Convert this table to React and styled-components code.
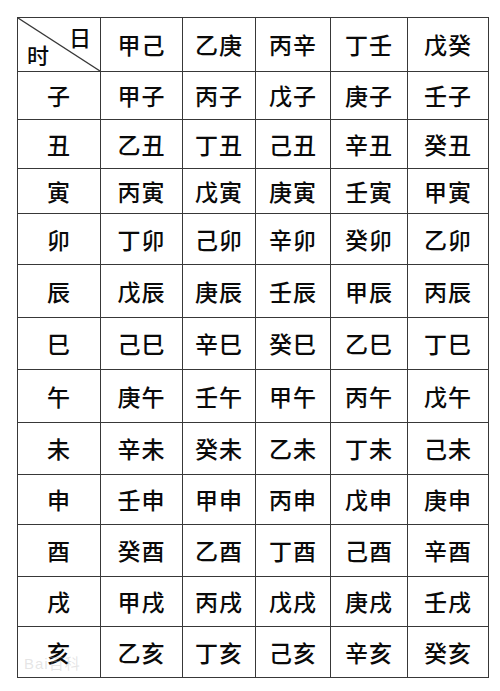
import React from "react";
import styled, { createGlobalStyle } from "styled-components";

const Global = createGlobalStyle`
  html, body { margin: 0; padding: 0; background: #fff; }
  body { width: 500px; height: 691px; overflow: hidden; }
`;

const Page = styled.div`
  position: relative;
  width: 500px;
  height: 691px;
  padding: 17px 0 0 17px;
  box-sizing: border-box;
  background: #fff;
  font-family: "Noto Sans CJK SC", "Noto Sans", sans-serif;
`;

const Table = styled.table`
  border-collapse: collapse;
  table-layout: fixed;
  width: 471px;
`;

const Row = styled.tr`
  height: ${(p) => p.$h}px;
`;

const Cell = styled.td`
  border: 1.5px solid #383838;
  padding: 0;
  text-align: center;
  vertical-align: middle;
  font-size: 23px;
  font-weight: 500;
  color: #0a0a0a;
  letter-spacing: 1px;
  line-height: 1;
`;

const CornerCell = styled.td`
  border: 1.5px solid #383838;
  padding: 0;
  position: relative;
  font-size: 22px;
  font-weight: 500;
  color: #0a0a0a;
  line-height: 1;
`;

const Diagonal = styled.svg`
  position: absolute;
  inset: 0;
  width: 100%;
  height: 100%;
`;

const DayLabel = styled.span`
  position: absolute;
  top: 7px;
  right: 9px;
`;

const HourLabel = styled.span`
  position: absolute;
  left: 9px;
  bottom: 6px;
`;

const Watermark = styled.div`
  position: absolute;
  left: 24px;
  top: 652px;
  font-family: "Liberation Sans", "Noto Sans CJK SC", sans-serif;
  font-size: 15px;
  color: rgba(180, 180, 180, 0.35);
  letter-spacing: 1px;
  pointer-events: none;
`;

const colWidths = [83, 82, 73, 75, 77, 81];
const heads = ["甲己", "乙庚", "丙辛", "丁壬", "戊癸"];
const rowHeights = [48, 49, 45, 51, 53, 52, 53, 52, 50, 52, 50, 51];

const rows = [
  ["子", "甲子", "丙子", "戊子", "庚子", "壬子"],
  ["丑", "乙丑", "丁丑", "己丑", "辛丑", "癸丑"],
  ["寅", "丙寅", "戊寅", "庚寅", "壬寅", "甲寅"],
  ["卯", "丁卯", "己卯", "辛卯", "癸卯", "乙卯"],
  ["辰", "戊辰", "庚辰", "壬辰", "甲辰", "丙辰"],
  ["巳", "己巳", "辛巳", "癸巳", "乙巳", "丁巳"],
  ["午", "庚午", "壬午", "甲午", "丙午", "戊午"],
  ["未", "辛未", "癸未", "乙未", "丁未", "己未"],
  ["申", "壬申", "甲申", "丙申", "戊申", "庚申"],
  ["酉", "癸酉", "乙酉", "丁酉", "己酉", "辛酉"],
  ["戌", "甲戌", "丙戌", "戊戌", "庚戌", "壬戌"],
  ["亥", "乙亥", "丁亥", "己亥", "辛亥", "癸亥"],
];

export default function App() {
  return (
    <>
      <Global />
      <Page>
        <Table>
          <colgroup>
            {colWidths.map((w, i) => (
              <col key={i} style={{ width: w }} />
            ))}
          </colgroup>
          <tbody>
            <Row $h={54}>
              <CornerCell>
                <Diagonal viewBox="0 0 100 100" preserveAspectRatio="none">
                  <line x1="0" y1="0" x2="100" y2="100" stroke="#383838" strokeWidth="1.3" vectorEffect="non-scaling-stroke" />
                </Diagonal>
                <DayLabel>日</DayLabel>
                <HourLabel>时</HourLabel>
              </CornerCell>
              {heads.map((h) => (
                <Cell key={h}>{h}</Cell>
              ))}
            </Row>
            {rows.map((r, i) => (
              <Row key={r[0]} $h={rowHeights[i]}>
                {r.map((c, j) => (
                  <Cell key={j}>{c}</Cell>
                ))}
              </Row>
            ))}
          </tbody>
        </Table>
        <Watermark>Bai百科</Watermark>
      </Page>
    </>
  );
}
